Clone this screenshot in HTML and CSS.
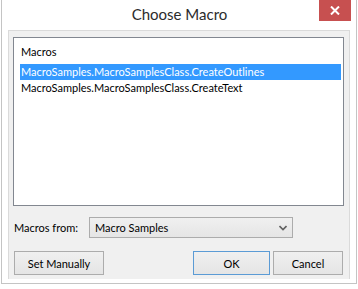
FILE: index.html
```html
<!DOCTYPE html>
<html lang="en">
<head>
    <meta charset="UTF-8">
    <title>Choose Macro</title>
    <link rel="stylesheet" href="styles.css">
</head>
<body>
    <div class="window">
        <div class="titlebar">
            <div class="title">Choose Macro</div>
            <div class="close">
                <svg width="10" height="9" viewBox="0 0 10 9">
                    <path d="M1 0.5 L9 8.5 M9 0.5 L1 8.5" stroke="#fff" stroke-width="2"/>
                </svg>
            </div>
        </div>
        <div class="client">
            <div class="listbox">
                <div class="list-header">Macros</div>
                <div class="row selected">MacroSamples.MacroSamplesClass.CreateOutlines</div>
                <div class="row">MacroSamples.MacroSamplesClass.CreateText</div>
            </div>
            <div class="from-row">
                <label class="from-label">Macros from:</label>
                <div class="combo">
                    <span>Macro Samples</span>
                    <svg width="8" height="6" viewBox="0 0 8 6">
                        <path d="M0.5 1 L4 4.5 L7.5 1" stroke="#606060" stroke-width="1.6" fill="none"/>
                    </svg>
                </div>
            </div>
            <div class="buttons">
                <button class="btn manual">Set Manually</button>
                <div class="spacer"></div>
                <button class="btn ok">OK</button>
                <button class="btn cancel">Cancel</button>
            </div>
        </div>
    </div>
</body>
</html>
```

FILE: styles.css
```css
body {
    margin: 0;
    background: #ffffff;
    font-family: Lato, sans-serif;
    font-size: 11px;
    color: #000;
}
.window {
    width: 356px;
    height: 284px;
    margin-left: 1px;
    border: 1px solid #c4c4c4;
    border-top: none;
    background: #ffffff;
    box-sizing: border-box;
}
.titlebar {
    display: flex;
    height: 30px;
}
.title {
    flex: 1;
    text-align: center;
    font-size: 15px;
    line-height: 29px;
    color: #2b2b2b;
    padding-left: 38px;
}
.close {
    width: 32px;
    height: 21px;
    margin-right: 5px;
    background: #c75050;
    display: flex;
    align-items: center;
    justify-content: center;
}
.client {
    margin: 0 6px;
    height: 249px;
    background: #f0f0f0;
    border: 1px solid #dadada;
    border-bottom: none;
    box-sizing: border-box;
    padding: 6px 5px 0 4px;
}
.listbox {
    height: 169px;
    background: #fff;
    border: 1px solid #828790;
    box-sizing: border-box;
    padding: 6px 2px 0 6px;
}
.list-header {
    height: 20px;
    line-height: 16px;
    padding-left: 1px;
}
.row {
    height: 16px;
    line-height: 16px;
    padding-left: 1px;
    white-space: nowrap;
}
.row.selected {
    background: #3399ff;
    color: #fff;
}
.from-row {
    display: flex;
    align-items: center;
    margin-top: 11px;
}
.from-label {
    width: 75px;
    padding-left: 1px;
}
.combo {
    width: 204px;
    height: 21px;
    box-sizing: border-box;
    border: 1px solid #acacac;
    background: linear-gradient(#f0f0f0, #e5e5e5);
    display: flex;
    align-items: center;
    justify-content: space-between;
    padding: 0 5px 0 5px;
}
.buttons {
    display: flex;
    margin-top: 13px;
}
.spacer {
    flex: 1;
}
.btn {
    font-family: Lato, sans-serif;
    font-size: 11px;
    height: 24px;
    padding: 0;
    border: 1px solid #acacac;
    background: linear-gradient(#f0f0f0, #e5e5e5);
    color: #000;
}
.manual {
    width: 90px;
    margin-left: 1px;
}
.ok {
    width: 77px;
    border-color: #5b9bd5;
    margin-right: 3px;
}
.cancel {
    width: 70px;
    margin-right: 1px;
}
```
